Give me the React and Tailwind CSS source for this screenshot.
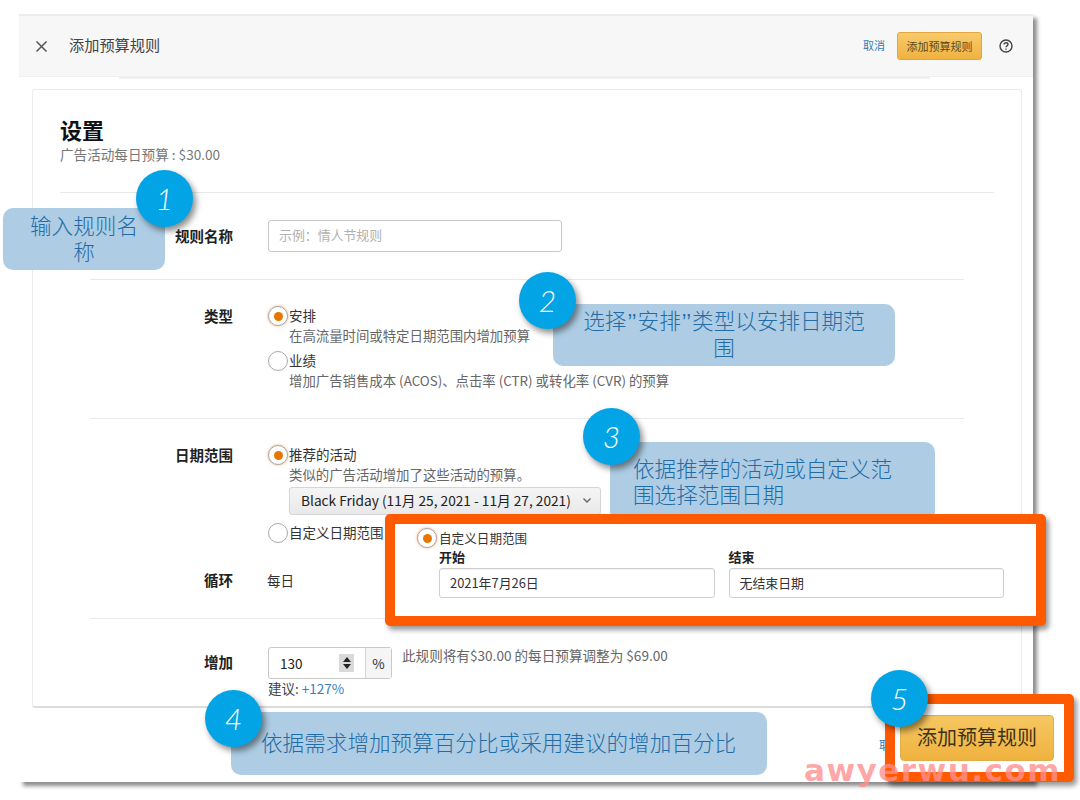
const FONT = "font-['Noto_Sans_CJK_SC','Noto_Sans',sans-serif]";

function Radio({ on, className = "" }) {
  return (
    <span className={`flex w-[20px] h-[20px] shrink-0 items-center justify-center rounded-full border border-[#a9a9a9] bg-white ${on ? "shadow-[0_0_3px_rgba(228,121,17,0.6)]" : ""} ${className}`}>
      {on && <span className="block w-[9px] h-[9px] rounded-full bg-[#e77600]" />}
    </span>
  );
}

function Row({ label, labelClass = "", className = "", children }) {
  return (
    <div className={`flex border-t border-[#e9e9e9] ml-[57px] mr-[57px] ${className}`}>
      <div className={`w-[143px] shrink-0 text-right text-[14.5px] font-bold text-[#222] leading-[18px] ${labelClass}`}>{label}</div>
      <div className="ml-[35px] flex-1 min-w-0">{children}</div>
    </div>
  );
}

function Choice({ on, title, desc, className = "" }) {
  return (
    <div className={`flex gap-[1px] ${className}`}>
      <Radio on={on} />
      <div className="min-w-0 -mt-[1px]">
        <div className="text-[13.5px] leading-[20px] text-[#333]">{title}</div>
        {desc && <div className="text-[13.4px] leading-[20px] text-[#666] whitespace-nowrap">{desc}</div>}
      </div>
    </div>
  );
}

function Note({ className, children }) {
  return <div className={`absolute rounded-[10px] bg-[#aecde4] text-[21.6px] text-[#1f6ca6] font-light ${className}`}>{children}</div>;
}

function Badge({ className, children }) {
  return (
    <div className={`absolute flex w-[57px] h-[57px] items-center justify-center rounded-full bg-[#02a4e6] text-white text-[30px] font-light italic font-['Lato',sans-serif] shadow-[3px_4px_6px_rgba(0,0,0,0.45)] ${className}`}>{children}</div>
  );
}

function Field({ label, value }) {
  return (
    <div className="flex-1">
      <div className="text-[13px] font-bold text-[#222] leading-[17px]">{label}</div>
      <div className="mt-[3px] flex h-[30px] items-center rounded-[3px] border border-[#cfcfcf] pl-[10px] text-[12.9px] text-[#333] shadow-[inset_0_1px_1px_rgba(0,0,0,0.06)]">{value}</div>
    </div>
  );
}

export default function App() {
  return (
    <div className={`relative w-[1080px] h-[800px] overflow-hidden bg-white ${FONT}`}>
      <div className="pl-[19px] pt-[14px]">
        <div className="flex h-[768px] w-[1014px] flex-col border-t-2 border-[#ececec] bg-white shadow-[4px_4px_4px_rgba(0,0,0,0.45)]">
          <header className="flex h-[61px] shrink-0 items-center bg-[#f7f7f7] border-b border-[#efefef]">
            <svg className="ml-[16px] w-[13px] h-[13px]" viewBox="0 0 13 13" fill="none" stroke="#555" strokeWidth="1.5"><path d="M1.5 1.5l10 10M11.5 1.5l-10 10" /></svg>
            <span className="ml-[21px] -mt-[3px] text-[15.2px] text-[#444]">添加预算规则</span>
            <span className="ml-auto -mt-[2px] text-[11px] text-[#2f7fb5]">取消</span>
            <button className="ml-[12px] h-[28px] w-[85px] rounded-[3px] bg-gradient-to-b from-[#f7ca6c] to-[#f0b240] border border-[#e0a83c] text-[11px] text-[#5a4a20]">添加预算规则</button>
            <svg className="ml-[17px] mr-[20px] w-[14px] h-[14px]" viewBox="0 0 14 14" fill="none" stroke="#444" strokeWidth="1.4">
              <circle cx="7" cy="7" r="6" />
              <path d="M5 5.6c0-1.2 1-1.8 2-1.8s2 .7 2 1.7c0 1.4-2 1.4-2 2.8" />
              <path d="M7 9.6v1.2" />
            </svg>
          </header>
          <div className="ml-[100px] mr-[103px] h-[2px] shrink-0 bg-[#f0f0f0]" />

          <div className="ml-[13px] mr-[11px] mt-[10px] h-[619px] shrink-0 rounded-[3px] border border-[#ececec] border-b-2 border-b-[#dcdcdc] bg-white">
            <div className="pl-[27px] pr-[26px] pt-[25px] h-[102px]">
              <div className="text-[22px] font-bold leading-[28px] text-[#111]">设置</div>
              <div className="text-[13.6px] leading-[20px] text-[#777] pt-[1px]">广告活动每日预算 : $30.00</div>
            </div>
            <div className="mx-[27px] border-t border-[#e9e9e9]" />
            <div className="h-[86px] flex ml-[57px] mr-[57px]">
              <div className="w-[143px] shrink-0 text-right text-[14.5px] font-bold text-[#222] leading-[18px] pt-[34px]">规则名称</div>
              <div className="ml-[35px] pt-[27px]">
                <div className="flex h-[32px] w-[294px] items-center rounded-[3px] border border-[#c9c9c9] pl-[10px] pb-[2px] text-[12.9px] text-[#b0b0b0]">示例：情人节规则</div>
              </div>
            </div>
            <Row label="类型" labelClass="pt-[27px]" className="h-[139px]">
              <div className="pt-[26px]">
                <Choice on title="安排" desc="在高流量时间或特定日期范围内增加预算" />
                <Choice title="业绩" desc="增加广告销售成本 (ACOS)、点击率 (CTR) 或转化率 (CVR) 的预算" className="mt-[6px]" />
              </div>
            </Row>
            <Row label="日期范围" labelClass="pt-[27px]" className="h-[200px]">
              <div className="pt-[26px]">
                <Choice on title="推荐的活动" desc="类似的广告活动增加了这些活动的预算。" />
                <div className="ml-[21px] mt-[3px] flex h-[28px] w-[312px] items-center justify-between rounded-[3px] border border-[#d5d5d5] bg-gradient-to-b from-[#f5f5f5] to-[#e9e9e9] pl-[11px] pr-[8px] pb-[2px] text-[13.7px] text-[#222] whitespace-nowrap">
                  <span>Black Friday (11月 25, 2021 - 11月 27, 2021)</span>
                  <svg className="w-[10px] h-[10px]" viewBox="0 0 10 10" fill="none" stroke="#666" strokeWidth="1.4"><path d="M1.5 3.5L5 7l3.5-3.5" /></svg>
                </div>
                <Choice title="自定义日期范围" className="mt-[8px]" />
              </div>
            </Row>
            <div className="-mt-[47px] flex ml-[57px] mr-[57px] h-[47px]">
              <div className="w-[143px] shrink-0 text-right text-[14.5px] font-bold text-[#222] leading-[18px]">循环</div>
              <div className="ml-[34px] text-[13.5px] text-[#333] leading-[18px]">每日</div>
            </div>
            <Row label="增加" labelClass="pt-[34px]" className="h-[90px]">
              <div className="pt-[28px]">
                <div className="flex items-start">
                  <div className="flex h-[32px] w-[124px] rounded-[3px] border border-[#c9c9c9] text-[13.5px] text-[#222]">
                    <div className="flex flex-1 items-center justify-between pl-[11px] pr-[11px]">
                      <span>130</span>
                      <span className="flex h-[18px] w-[15px] flex-col items-center justify-center gap-[2px] bg-[#d9d9d9]">
                        <span className="block border-x-[4px] border-b-[5px] border-x-transparent border-b-[#222]" />
                        <span className="block border-x-[4px] border-t-[5px] border-x-transparent border-t-[#222]" />
                      </span>
                    </div>
                    <div className="flex w-[26px] items-center justify-center border-l border-[#d5d5d5] bg-[#f5f5f5] text-[#333]">%</div>
                  </div>
                  <div className="ml-[10px] text-[13.6px] leading-[16px] text-[#666] whitespace-nowrap">此规则将有$30.00 的每日预算调整为 $69.00</div>
                </div>
                <div className="text-[13.5px] leading-[18px] text-[#444]">建议: <span className="text-[#3b7fc4]">+127%</span></div>
              </div>
            </Row>
          </div>

          <footer className="flex flex-1 items-center pl-[860px] text-[12px] text-[#2f7fb5]">
            <span>取</span>
          </footer>
        </div>
      </div>

      <Note className="left-[3px] top-[208px] w-[162px] h-[62px] px-[20px] pt-[4px] leading-[26px] text-center">输入规则名称</Note>
      <Note className="left-[553px] top-[304px] w-[342px] h-[62px] px-[26px] pt-[3px] leading-[25px] text-center">选择<span className="font-['Liberation_Sans'] px-[1px]">’’</span>安排<span className="font-['Liberation_Sans'] px-[1px]">’’</span>类型以安排日期范围</Note>
      <Note className="left-[610px] top-[442px] w-[325px] h-[80px] pl-[23px] pr-[30px] pt-[13px] leading-[26px]">依据推荐的活动或自定义范围选择范围日期</Note>
      <Note className="left-[231px] top-[712px] w-[536px] h-[63px] pl-[30px] pt-[17px] leading-[26px] whitespace-nowrap">依据需求增加预算百分比或采用建议的增加百分比</Note>

      <div className="absolute left-[385px] top-[514px] flex h-[112px] w-[661px] flex-col rounded-[5px] border-[10px] border-[#ff5a00] bg-white pl-[44px] pr-[32px] pt-[4px] shadow-[3px_4px_5px_rgba(0,0,0,0.4)]">
        <div className="-ml-[22px] flex items-center gap-[2px] h-[20px]">
          <Radio on className="w-[18px] h-[18px]" />
          <span className="text-[12.6px] text-[#333]">自定义日期范围</span>
        </div>
        <div className="flex gap-[14px]">
          <Field label="开始" value="2021年7月26日" />
          <Field label="结束" value="无结束日期" />
        </div>
      </div>

      <div className="absolute left-[885px] top-[694px] flex h-[88px] w-[189px] items-start rounded-[5px] border-[10px] border-[#ff5a00] bg-white pl-[5px] pt-[11px] shadow-[3px_4px_5px_rgba(0,0,0,0.4)]">
        <button className="flex h-[46px] w-[154px] items-center justify-center rounded-[4px] bg-gradient-to-b from-[#f6c761] to-[#efb23e] border border-[#dfae4a] text-[20px] leading-[24px] text-[#3f3418] pb-[2px]">添加预算规则</button>
      </div>

      <Badge className="left-[136px] top-[170px]">1</Badge>
      <Badge className="left-[519px] top-[272px]">2</Badge>
      <Badge className="left-[583px] top-[408px]">3</Badge>
      <Badge className="left-[205px] top-[690px]">4</Badge>
      <Badge className="left-[871px] top-[670px]">5</Badge>

      <div className="absolute left-[804px] top-[754px] text-[31px] font-bold leading-[32px] tracking-[1.5px] text-[#ff8f8f]/80 font-['DejaVu_Sans',sans-serif] whitespace-nowrap">awyerwu.com</div>
    </div>
  );
}
